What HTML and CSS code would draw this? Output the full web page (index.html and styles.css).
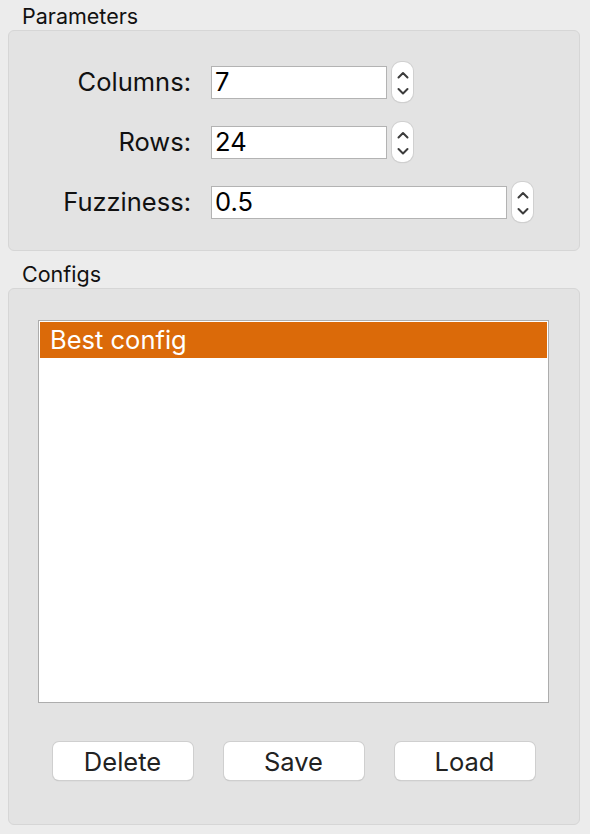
FILE: index.html
```html
<!DOCTYPE html>
<html>
<head>
<meta charset="utf-8">
<link rel="stylesheet" href="styles.css">
</head>
<body>
<div class="window">
  <div class="title">Parameters</div>
  <div class="group params">
    <div class="form">
      <label class="lbl">Columns:</label>
      <div class="field">
        <div class="input short">7</div>
        <div class="spin"><svg width="12" height="26" viewBox="0 0 12 26"><path d="M1.5 8.5 L6 4 L10.5 8.5" /><path d="M1.5 20 L6 24.5 L10.5 20" /></svg></div>
      </div>
      <label class="lbl">Rows:</label>
      <div class="field">
        <div class="input short">24</div>
        <div class="spin"><svg width="12" height="26" viewBox="0 0 12 26"><path d="M1.5 8.5 L6 4 L10.5 8.5" /><path d="M1.5 20 L6 24.5 L10.5 20" /></svg></div>
      </div>
      <label class="lbl">Fuzziness:</label>
      <div class="field">
        <div class="input long">0.5</div>
        <div class="spin"><svg width="12" height="26" viewBox="0 0 12 26"><path d="M1.5 8.5 L6 4 L10.5 8.5" /><path d="M1.5 20 L6 24.5 L10.5 20" /></svg></div>
      </div>
    </div>
  </div>
  <div class="title second">Configs</div>
  <div class="group configs">
    <div class="list">
      <div class="item selected">Best config</div>
    </div>
    <div class="buttons">
      <button class="btn">Delete</button>
      <button class="btn">Save</button>
      <button class="btn">Load</button>
    </div>
  </div>
</div>
</body>
</html>
```
FILE: styles.css
```css
html, body {
  margin: 0;
  padding: 0;
  background: #ececec;
}
body {
  font-family: Inter, "Liberation Sans", sans-serif;
  color: #1a1a1a;
  width: 590px;
  height: 834px;
  overflow: hidden;
}
.window {
  padding: 0 10px 0 8px;
  display: flex;
  flex-direction: column;
}
.title {
  font-size: 21.5px;
  line-height: 24px;
  height: 24px;
  padding: 4px 0 2px 14px;
  color: #111;
}
.title.second {
  margin-top: 7px;
}
.group {
  background: #e3e3e3;
  border: 1px solid #d6d6d6;
  border-radius: 6px;
  box-sizing: border-box;
}
.params {
  height: 221px;
  padding-top: 31px;
}
.form {
  display: grid;
  grid-template-columns: 182px 1fr;
  column-gap: 20px;
  row-gap: 20px;
  align-items: center;
}
.lbl {
  font-size: 25.5px;
  line-height: 30px;
  text-align: right;
  color: #111;
  margin-top: -1px;
}
.field {
  display: flex;
  align-items: center;
  gap: 5px;
  height: 40px;
}
.input {
  height: 33px;
  box-sizing: border-box;
  background: #fff;
  border: 1px solid #b3b3b3;
  font-size: 25.5px;
  line-height: 30px;
  padding-left: 3px;
  color: #000;
}
.input.short { width: 176px; }
.input.long { width: 296px; }
.spin {
  width: 21px;
  height: 40px;
  box-sizing: border-box;
  background: #fff;
  border-radius: 9px;
  box-shadow: 0 0 0 1px #d0d0d0, 0 1px 1px rgba(0,0,0,0.15);
  display: flex;
  align-items: center;
  justify-content: center;
}
.spin svg path {
  fill: none;
  stroke: #3c3c3c;
  stroke-width: 2;
  stroke-linecap: round;
  stroke-linejoin: round;
}
.configs {
  height: 537px;
  padding: 31px 30px 44px 29px;
  display: flex;
  flex-direction: column;
}
.list {
  height: 383px;
  box-sizing: border-box;
  background: #fff;
  border: 1px solid #adadad;
  padding: 1px;
}
.item {
  height: 36px;
  line-height: 35px;
  font-size: 25.5px;
  padding-left: 10px;
}
.item.selected {
  background: #db6a09;
  color: #fff;
}
.buttons {
  margin-top: 39px;
  display: flex;
  justify-content: center;
  gap: 31px;
  padding-left: 0;
}
.btn {
  width: 140px;
  height: 38px;
  background: #fff;
  border: none;
  border-radius: 6px;
  box-shadow: 0 0 0 1px #cfcfcf, 0 1px 1px rgba(0,0,0,0.25);
  font-family: Inter, "Liberation Sans", sans-serif;
  font-size: 25.5px;
  color: #222;
  padding: 0;
}
```
